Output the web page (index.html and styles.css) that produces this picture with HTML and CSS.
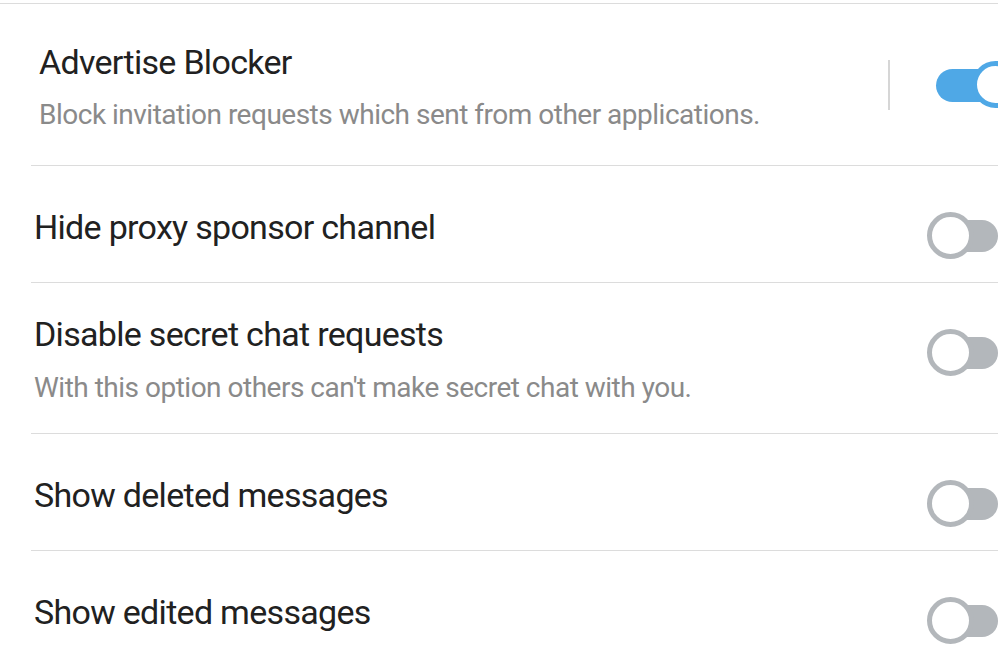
FILE: index.html
```html
<!DOCTYPE html>
<html lang="en">
<head>
  <meta charset="UTF-8">
  <meta name="viewport" content="width=device-width, initial-scale=1.0">
  <title>Privacy Settings</title>
  <link rel="stylesheet" href="styles.css">
</head>
<body>

  <div class="settings">

    <div class="row row-main">
      <div class="text">
        <div class="title">Advertise Blocker</div>
        <div class="subtitle">Block invitation requests which sent from other applications.</div>
      </div>
      <div class="divider"></div>
      <div class="switch switch-on">
        <span class="track"></span>
        <span class="thumb"></span>
      </div>
    </div>

    <div class="row">
      <div class="text">
        <div class="title">Hide proxy sponsor channel</div>
      </div>
      <div class="switch">
        <span class="track"></span>
        <span class="thumb"></span>
      </div>
    </div>

    <div class="row row-two">
      <div class="text">
        <div class="title">Disable secret chat requests</div>
        <div class="subtitle">With this option others can't make secret chat with you.</div>
      </div>
      <div class="switch">
        <span class="track"></span>
        <span class="thumb"></span>
      </div>
    </div>

    <div class="row">
      <div class="text">
        <div class="title">Show deleted messages</div>
      </div>
      <div class="switch">
        <span class="track"></span>
        <span class="thumb"></span>
      </div>
    </div>

    <div class="row">
      <div class="text">
        <div class="title">Show edited messages</div>
      </div>
      <div class="switch">
        <span class="track"></span>
        <span class="thumb"></span>
      </div>
    </div>

  </div>

</body>
</html>
```

FILE: styles.css
```css
body {
  margin: 0;
  padding: 0;
  font-family: Roboto, 'Noto Sans', sans-serif;
  background-color: #fff;
  color: #212121;
  overflow: hidden;
}

.settings {
  margin-top: 3px;
  border-top: 1px solid #dcdcdc;
}

.row {
  display: flex;
  align-items: flex-start;
  margin-left: 31px;
  padding-left: 3px;
  border-bottom: 1px solid #dcdcdc;
}

.row:last-child {
  border-bottom: none;
}

.text {
  flex: 1;
  padding: 41px 0 35px;
}

.title {
  font-size: 34px;
  line-height: 40px;
  letter-spacing: -0.7px;
  color: #212121;
}

.subtitle {
  font-size: 28px;
  line-height: 34px;
  letter-spacing: -0.5px;
  color: #8a8a8a;
  margin-top: 15px;
}

/* first item sits a bit further in and is centered */
.row-main {
  align-items: center;
  padding-left: 8px;
  height: 161px;
}

.row-main .text {
  padding: 4px 0 0;
}

.row-main .subtitle {
  margin-top: 16px;
}

.row-two .text {
  padding: 31px 0 28px;
}

.row-two .subtitle {
  margin-top: 17px;
}

.divider {
  width: 2px;
  height: 50px;
  background-color: #d6d6d6;
  margin-right: 46px;
}

/* switches */
.switch {
  position: relative;
  flex-shrink: 0;
  width: 71px;
  height: 47px;
  margin-top: 46px;
}

.track {
  position: absolute;
  left: 5px;
  right: 0;
  top: 8px;
  height: 32px;
  border-radius: 16px;
  background-color: #b3b7bb;
}

.thumb {
  position: absolute;
  left: 0;
  top: 0;
  width: 37px;
  height: 37px;
  border: 5px solid #b3b7bb;
  border-radius: 50%;
  background-color: #fff;
}

.switch-on {
  width: 62px;
  margin-top: 0;
}

.switch-on .track {
  left: 0;
  right: -16px;
  top: 8px;
  height: 33px;
  border-radius: 17px;
  background-color: #4fa8e6;
}

.switch-on .thumb {
  left: 36px;
  border-color: #4fa8e6;
}
```
